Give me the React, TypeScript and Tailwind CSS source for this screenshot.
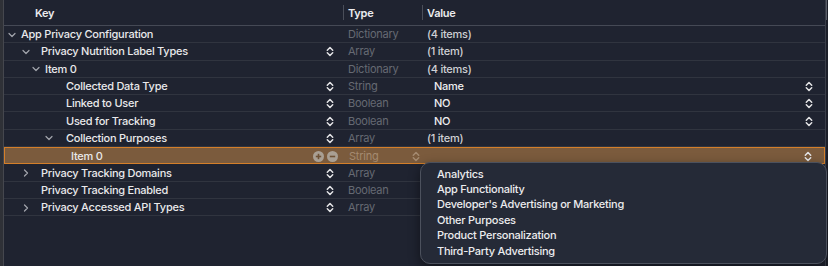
import React from "react";

type Row = {
  label: string;
  chevron?: "down" | "right";
  chevronClass?: string;
  textClass: string;
  type: string;
  value?: string;
  valueStrong?: boolean;
  keyStepper?: boolean;
  valueStepper?: boolean;
  selected?: boolean;
};

const rows: Row[] = [
  { label: "App Privacy Configuration", chevron: "down", chevronClass: "ml-[3px]", textClass: "ml-[4px]", type: "Dictionary", value: "(4 items)" },
  { label: "Privacy Nutrition Label Types", chevron: "down", chevronClass: "ml-[17px]", textClass: "ml-[10px]", type: "Array", value: "(1 item)", keyStepper: true },
  { label: "Item 0", chevron: "down", chevronClass: "ml-[27px]", textClass: "ml-[4px]", type: "Dictionary", value: "(4 items)" },
  { label: "Collected Data Type", textClass: "ml-[62px]", type: "String", value: "Name", valueStrong: true, keyStepper: true, valueStepper: true },
  { label: "Linked to User", textClass: "ml-[62px]", type: "Boolean", value: "NO", valueStrong: true, keyStepper: true, valueStepper: true },
  { label: "Used for Tracking", textClass: "ml-[62px]", type: "Boolean", value: "NO", valueStrong: true, keyStepper: true, valueStepper: true },
  { label: "Collection Purposes", chevron: "down", chevronClass: "ml-[40px]", textClass: "ml-[12px]", type: "Array", value: "(1 item)", keyStepper: true },
  { label: "Item 0", textClass: "ml-[66px]", type: "String", selected: true, valueStepper: true },
  { label: "Privacy Tracking Domains", chevron: "right", chevronClass: "ml-[17px]", textClass: "ml-[10px]", type: "Array", keyStepper: true },
  { label: "Privacy Tracking Enabled", textClass: "ml-[37px]", type: "Boolean", keyStepper: true },
  { label: "Privacy Accessed API Types", chevron: "right", chevronClass: "ml-[17px]", textClass: "ml-[10px]", type: "Array", keyStepper: true },
];

const purposes = [
  "Analytics",
  "App Functionality",
  "Developer's Advertising or Marketing",
  "Other Purposes",
  "Product Personalization",
  "Third-Party Advertising",
];

function Stepper({ className = "" }: { className?: string }) {
  return (
    <svg width="8" height="11" viewBox="0 0 8 11" className={className}>
      <path d="M1.3 4.2 L4 1.5 L6.7 4.2" fill="none" stroke="currentColor" strokeWidth="1.5" strokeLinecap="round" strokeLinejoin="round" />
      <path d="M1.3 6.8 L4 9.5 L6.7 6.8" fill="none" stroke="currentColor" strokeWidth="1.5" strokeLinecap="round" strokeLinejoin="round" />
    </svg>
  );
}

function Chevron({ dir }: { dir: "down" | "right" }) {
  return (
    <svg width="10" height="10" viewBox="0 0 10 10" className="text-[#a3a6ad]">
      {dir === "down" ? (
        <path d="M2 3.5 L5 6.5 L8 3.5" fill="none" stroke="currentColor" strokeWidth="1.2" strokeLinecap="round" strokeLinejoin="round" />
      ) : (
        <path d="M3.5 2 L6.5 5 L3.5 8" fill="none" stroke="currentColor" strokeWidth="1.2" strokeLinecap="round" strokeLinejoin="round" />
      )}
    </svg>
  );
}

function RoundButton({ sign }: { sign: "plus" | "minus" }) {
  return (
    <svg width="11" height="11" viewBox="0 0 11 11">
      <circle cx="5.5" cy="5.5" r="5.5" fill="#a99f93" />
      <path d="M2.8 5.5 H8.2" stroke="#6e5236" strokeWidth="1.6" />
      {sign === "plus" && <path d="M5.5 2.8 V8.2" stroke="#6e5236" strokeWidth="1.6" />}
    </svg>
  );
}

export default function App() {
  return (
    <div className="w-[828px] h-[266px] bg-[#1f2330] flex overflow-hidden font-['Inter','Noto_Sans',sans-serif] text-[11px] leading-none tracking-[-0.25px] select-none">
      <div className="w-[4px] bg-[#2f3137] border-r border-[#45474e]" />

      <div className="relative w-[821px] flex flex-col">
        {/* header */}
        <div className="h-[26px] flex items-center border-b border-[#454955] font-semibold text-[#ececee]">
          <div className="w-[339px] pl-[31px] pt-[1px]">Key</div>
          <div className="w-[79px] h-[15px] flex items-center border-l border-[#4a4e59] pl-[4px] pt-[1px]">Type</div>
          <div className="flex-1 h-[15px] flex items-center border-l border-[#4a4e59] pl-[4px] pt-[1px]">Value</div>
        </div>

        {rows.map((r, i) => (
          <div
            key={i}
            className={
              r.selected
                ? "h-[17.3px] flex items-center pt-[1px] bg-[#7b5b3d] border border-[#d47f2a]"
                : "h-[17.3px] flex items-center pt-[1px] border-b border-[#30343f]"
            }
          >
            <div className="w-[339px] flex items-center">
              {r.chevron && (
                <span className={`w-[10px] flex justify-center ${r.chevronClass}`}>
                  <Chevron dir={r.chevron} />
                </span>
              )}
              <span className={`font-medium text-[#e9e9eb] ${r.textClass}`}>{r.label}</span>
              <span className="flex-1" />
              {r.keyStepper && <Stepper className="mr-[9px] text-[#e4e4e6]" />}
              {r.selected && (
                <span className="flex items-center gap-[3px] mr-[6px]">
                  <RoundButton sign="plus" />
                  <RoundButton sign="minus" />
                </span>
              )}
            </div>
            <div className={`w-[79px] flex items-center pl-[5px] ${r.selected ? "text-[#a48a70]" : "text-[#666a73]"}`}>
              <span>{r.type}</span>
              <span className="flex-1" />
              {r.selected && <Stepper className="mr-[3px] text-[#a48a70]" />}
            </div>
            <div className="flex-1 flex items-center">
              {r.value && (
                <span className={r.valueStrong ? "pl-[12px] font-medium text-[#ededef]" : "pl-[5px] font-medium text-[#cfd0d4]"}>
                  {r.value}
                </span>
              )}
              <span className="flex-1" />
              {r.valueStepper && <Stepper className="mr-[12px] text-[#e4e4e6]" />}
            </div>
          </div>
        ))}

        {/* popup menu */}
        <div className="absolute left-[416px] top-[162px] w-[407px] h-[102px] rounded-[10px] bg-[#252a37] border border-[#4c515d] shadow-[0_4px_12px_rgba(0,0,0,0.45)] pt-[3px] pl-[16px]">
          {purposes.map((p) => (
            <div key={p} className="h-[15.4px] flex items-center pt-[1px] font-medium text-[#ececee]">
              {p}
            </div>
          ))}
        </div>
      </div>

      <div className="w-[3px] border-l border-[#3a3e49] bg-[#1c1f29]">
        <div className="h-[20px] w-[1px] bg-[#5a5e68]" />
      </div>
    </div>
  );
}
